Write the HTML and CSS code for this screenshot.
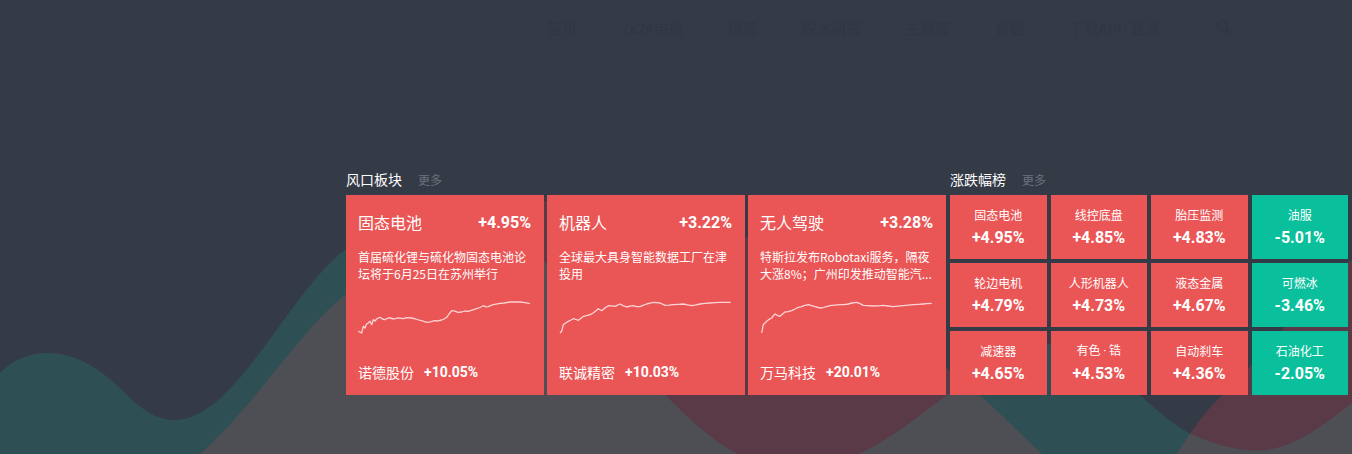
FILE: index.html
```html
<!DOCTYPE html>
<html lang="zh-CN">
<head>
    <meta charset="UTF-8">
    <meta name="viewport" content="width=device-width, initial-scale=1.0">
    <title>风口板块</title>
    <link rel="stylesheet" href="styles.css">
</head>
<body>
    <div class="bg-waves">
        <svg width="1352" height="454" viewBox="0 0 1352 454">
            <path class="wave-red" d="M0,520 C100,520 160,480 200,454 C260,400 300,330 345,295 C430,225 520,190 620,200 C760,215 900,330 980,395 C1030,440 1080,500 1120,500 C1160,500 1190,420 1223,395 C1270,350 1310,290 1352,260 L1352,600 L0,600 Z"/>
            <path class="wave-green" d="M0,373 C20,352 55,345 90,365 C125,385 140,420 175,420 C235,420 290,290 345,250 C410,200 460,195 520,240 C600,300 700,480 800,470 C860,465 900,430 947,395 C990,360 1040,330 1080,350 C1120,370 1160,420 1193,435 C1220,447 1245,452 1267,450 C1300,445 1330,420 1352,403 L1352,600 L0,600 Z"/>
        </svg>
    </div>

    <header class="top-nav">
        <span>首页</span>
        <span>7x24电报</span>
        <span>精选</span>
        <span>脱水研报</span>
        <span>主题库</span>
        <span>看盘</span>
        <span>下载APP 登录</span>
        <svg class="search" width="16" height="16" viewBox="0 0 16 16">
            <circle cx="6.5" cy="6.5" r="5"/>
            <line x1="10.2" y1="10.2" x2="14.5" y2="14.5"/>
        </svg>
    </header>

    <main class="board">
        <section class="hot">
            <div class="sec-head">
                <span class="sec-title">风口板块</span>
                <span class="sec-more">更多</span>
            </div>
            <div class="hot-list">
                <div class="hot-card">
                    <div class="hot-top">
                        <span class="hot-name">固态电池</span>
                        <span class="hot-pct">+4.95%</span>
                    </div>
                    <p class="hot-desc">首届硫化锂与硫化物固态电池论坛将于6月25日在苏州举行</p>
                    <svg class="spark" width="174" height="38" viewBox="0 0 174 38">
                        <polyline points="0.3,33.3 2,34 3.7,35 5.3,28.3 7,30 8.5,26 10.3,25 12,23.3 13.7,26.7 15.3,21.7 17,23 19,20.5 22,19.3 24.5,21 27,21.7 29.5,20.2 32,20 36,21 40,19.8 45.3,20.7 49,19.6 53.7,20 57,20.8 61,22 65,23.2 68.7,24.3 72,23.8 77,22.7 80,22.9 83.7,22 86,21 88.7,19.3 91,16 93.7,12.7 97,13.2 100,14.3 103.7,14 107,13 110.3,13.3 114,12.2 118.7,10.7 122,9.5 125.3,7.7 128,8.9 130.3,8.7 133,7.4 135.3,6.7 138,6.1 142,5.3 146,5 152,4 157,3.8 162,4 167,4.6 172,5.7"/>
                    </svg>
                    <div class="hot-foot">
                        <span class="stock-name">诺德股份</span>
                        <span class="stock-pct">+10.05%</span>
                    </div>
                </div>
                <div class="hot-card">
                    <div class="hot-top">
                        <span class="hot-name">机器人</span>
                        <span class="hot-pct">+3.22%</span>
                    </div>
                    <p class="hot-desc">全球最大具身智能数据工厂在津投用</p>
                    <svg class="spark" width="174" height="38" viewBox="0 0 174 38">
                        <polyline points="1,35 2.7,33.3 4.3,26.7 6.5,25 9.3,23.3 12,22 14.3,20.7 17,21.5 19.3,22.3 22,20.2 24.3,18.3 27.5,17.6 31,16.7 34,15 36.5,13.2 39.3,10.7 42.7,12.7 46,10 49.3,7.7 52.5,7.9 56,8.3 58.5,7.2 61,6 64,7.6 67.7,9 71,8.2 74.3,7.7 77.5,8.6 81,8.7 84,7.4 87.7,6 91,5.1 94.3,4.3 97.5,4.6 101,5 103.5,6.2 106,7.3 110,7.2 114.3,6.7 119,6.4 124.3,6 128.5,6.9 132.7,7.7 137,6.9 141,6 146,5.4 151,5 156,4.7 161,4.3 166,4.4 171.7,4.3"/>
                    </svg>
                    <div class="hot-foot">
                        <span class="stock-name">联诚精密</span>
                        <span class="stock-pct">+10.03%</span>
                    </div>
                </div>
                <div class="hot-card">
                    <div class="hot-top">
                        <span class="hot-name">无人驾驶</span>
                        <span class="hot-pct">+3.28%</span>
                    </div>
                    <p class="hot-desc">特斯拉发布Robotaxi服务，隔夜大涨8%；广州印发推动智能汽...</p>
                    <svg class="spark" width="174" height="38" viewBox="0 0 174 38">
                        <polyline points="1.7,35 3.3,26.7 5,25 6.7,23.3 9,21.4 11.7,20 13.5,17.5 15,16 17.5,17.4 20,18.3 22.5,16 25,14 28,13.6 31.7,12.7 35,11 38.3,9.3 41,8.8 44,7.6 48.3,6.7 51.5,7.6 55,8.7 58,9.5 61.7,10 65.5,8.8 70,7.7 75,7.2 80,6.7 84,6.6 88.3,6 92,5 96.7,4.3 100,5.6 103.3,7.3 108,7.6 113.3,8 118,7.8 123.3,7.3 128,8 133.3,8.7 138,8.2 143.3,7.7 148,7.2 153.3,6.7 158,6.4 163.3,6 167,5.7 171.7,5.3"/>
                    </svg>
                    <div class="hot-foot">
                        <span class="stock-name">万马科技</span>
                        <span class="stock-pct">+20.01%</span>
                    </div>
                </div>
            </div>
        </section>

        <section class="rank">
            <div class="sec-head">
                <span class="sec-title">涨跌幅榜</span>
                <span class="sec-more">更多</span>
            </div>
            <div class="rank-grid">
                <div class="rank-item up"><span class="rank-name">固态电池</span><span class="rank-pct">+4.95%</span></div>
                <div class="rank-item up"><span class="rank-name">线控底盘</span><span class="rank-pct">+4.85%</span></div>
                <div class="rank-item up"><span class="rank-name">胎压监测</span><span class="rank-pct">+4.83%</span></div>
                <div class="rank-item down"><span class="rank-name">油服</span><span class="rank-pct">-5.01%</span></div>
                <div class="rank-item up"><span class="rank-name">轮边电机</span><span class="rank-pct">+4.79%</span></div>
                <div class="rank-item up"><span class="rank-name">人形机器人</span><span class="rank-pct">+4.73%</span></div>
                <div class="rank-item up"><span class="rank-name">液态金属</span><span class="rank-pct">+4.67%</span></div>
                <div class="rank-item down"><span class="rank-name">可燃冰</span><span class="rank-pct">-3.46%</span></div>
                <div class="rank-item up"><span class="rank-name">减速器</span><span class="rank-pct">+4.65%</span></div>
                <div class="rank-item up"><span class="rank-name">有色 <span class="dot">·</span> 锆</span><span class="rank-pct">+4.53%</span></div>
                <div class="rank-item up"><span class="rank-name">自动刹车</span><span class="rank-pct">+4.36%</span></div>
                <div class="rank-item down"><span class="rank-name">石油化工</span><span class="rank-pct">-2.05%</span></div>
            </div>
        </section>
    </main>
</body>
</html>
```

FILE: styles.css
```css
body {
    margin: 0;
    padding: 0;
    width: 1352px;
    height: 454px;
    overflow: hidden;
    position: relative;
    background-color: #353a47;
    color: #fff;
    font-family: "Noto Sans CJK SC", "Noto Sans", sans-serif;
}

.bg-waves {
    position: absolute;
    top: 0;
    left: 0;
    z-index: 0;
}

.bg-waves svg {
    display: block;
}

.wave-red {
    fill: rgba(238, 58, 76, 0.2);
}

.wave-green {
    fill: rgba(11, 191, 156, 0.16);
}

.top-nav {
    position: relative;
    z-index: 1;
    height: 54px;
    display: flex;
    align-items: center;
    gap: 44px;
    padding-left: 547px;
    font-size: 15px;
    color: #313643;
}

.top-nav .search {
    margin-left: 12px;
    fill: none;
    stroke: #313643;
    stroke-width: 2;
}

.board {
    position: relative;
    z-index: 1;
    display: flex;
    gap: 4px;
    margin: 115px 0 0 346px;
}

.sec-head {
    display: flex;
    align-items: baseline;
    gap: 16px;
    height: 20px;
    line-height: 20px;
    margin-bottom: 6px;
}

.sec-title {
    font-size: 14px;
    color: #fff;
}

.sec-more {
    font-size: 12px;
    color: #6c717c;
}

.hot-list {
    display: grid;
    grid-template-columns: repeat(3, 198px);
    gap: 3px;
}

.hot-card {
    height: 200px;
    box-sizing: border-box;
    padding: 16px 12px 14px 12px;
    background-color: #ea5556;
    display: flex;
    flex-direction: column;
}

.hot-top {
    display: flex;
    justify-content: space-between;
    align-items: center;
    height: 22px;
    padding-right: 1px;
}

.hot-name {
    font-size: 16px;
}

.hot-pct {
    font-family: Roboto, "Liberation Sans", sans-serif;
    font-weight: bold;
    font-size: 16px;
}

.hot-desc {
    margin: 15px 0 0;
    font-size: 12px;
    line-height: 17px;
    height: 34px;
    overflow: hidden;
    display: -webkit-box;
    -webkit-line-clamp: 2;
    -webkit-box-orient: vertical;
}

.spark {
    display: block;
    margin-top: 16px;
}

.spark polyline {
    fill: none;
    stroke: rgba(255, 235, 235, 0.85);
    stroke-width: 1.3;
    stroke-linejoin: round;
}

.hot-foot {
    margin-top: auto;
    display: flex;
    align-items: center;
    gap: 10px;
    height: 18px;
}

.stock-name {
    font-size: 14px;
}

.stock-pct {
    font-family: Roboto, "Liberation Sans", sans-serif;
    font-weight: bold;
    font-size: 14px;
}

.rank {
    width: 398px;
}

.rank-grid {
    display: grid;
    grid-template-columns: repeat(4, 1fr);
    grid-auto-rows: 64px;
    gap: 4px;
}

.rank-item {
    display: flex;
    flex-direction: column;
    align-items: center;
    justify-content: center;
    gap: 4px;
}

.rank-item.up {
    background-color: #ea5556;
}

.rank-item.down {
    background-color: #0ac09c;
}

.rank-name {
    font-size: 12px;
    line-height: 16px;
}

.rank-name .dot {
    font-family: Roboto, sans-serif;
}

.rank-pct {
    font-family: Roboto, "Liberation Sans", sans-serif;
    font-weight: bold;
    font-size: 16px;
    line-height: 21px;
}
```
